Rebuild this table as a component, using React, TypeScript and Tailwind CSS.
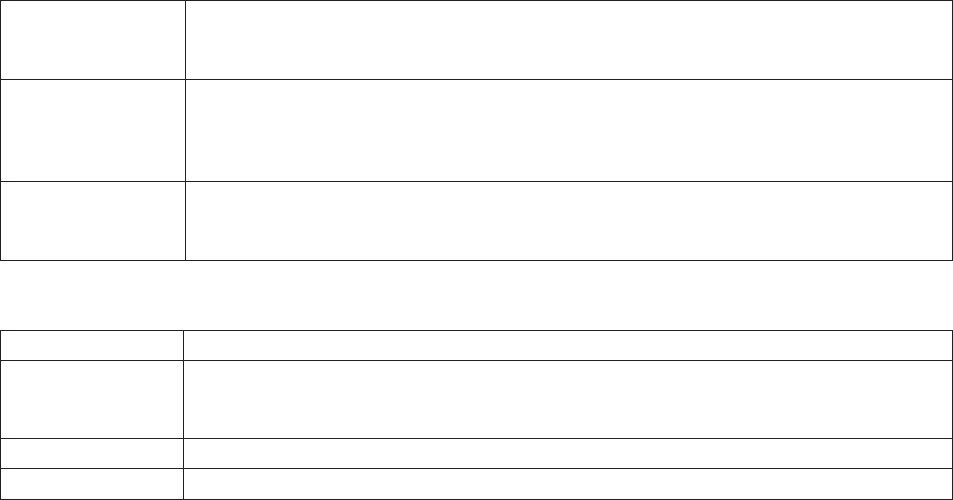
const line = 'border-[#231f20]';

function Table({ rows, first }: { rows: number[]; first: string }) {
  return (
    <div className={`w-[953px] border-t border-l ${line}`}>
      {rows.map((h, i) => (
        <div key={i} className="flex" style={{ height: h }}>
          <div className={`${first} shrink-0 border-r border-b ${line}`} />
          <div className={`flex-1 border-r border-b ${line}`} />
        </div>
      ))}
    </div>
  );
}

export default function App() {
  return (
    <div className="w-[953px] h-[500px] bg-white overflow-hidden">
      <Table rows={[79, 102, 79]} first="w-[185px]" />
      <div className="mt-[69px]">
        <Table rows={[30, 78, 30, 31]} first="w-[183px]" />
      </div>
    </div>
  );
}
